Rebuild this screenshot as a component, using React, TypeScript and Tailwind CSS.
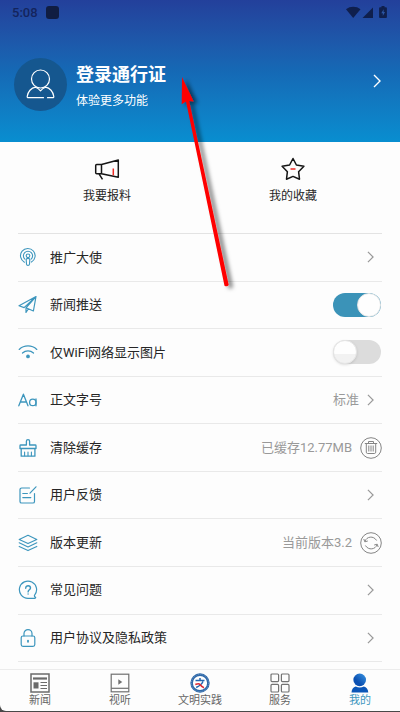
import { ReactNode, useState } from "react";

type IconProps = { className?: string; children: ReactNode };

const LineIcon = ({ className = "h-5 w-5", children }: IconProps) => (
  <svg
    className={`shrink-0 ${className}`}
    viewBox="0 0 20 20"
    fill="none"
    stroke="currentColor"
    strokeWidth="1.1"
    strokeLinecap="round"
    strokeLinejoin="round"
    aria-hidden="true"
  >
    {children}
  </svg>
);

const Chevron = ({ className }: { className: string }) => (
  <svg
    className={`shrink-0 ${className}`}
    viewBox="0 0 8 14"
    fill="none"
    stroke="currentColor"
    aria-hidden="true"
  >
    <path d="M1 1l6 6-6 6" strokeWidth="1.4" />
  </svg>
);

const icons = {
  promote: (
    <LineIcon>
      <path d="M6.4 15.2a7.300 7.300 0 1 1 7-.1" />
      <path d="M6.900 12.200a4.600 4.600 0 1 1 6.200 0" />
      <circle cx="10" cy="8.800" r="1.800" />
      <path d="M8.200 12.600c0-1.700 3.600-1.700 3.600 0l-.3 4.600c-.2 1.600-2.800 1.600-3 0z" />
    </LineIcon>
  ),
  push: (
    <LineIcon>
      <path d="M18 1.500L1 10.800l5.100 1.800zM18 1.500L8 12.800l7.400 3.200zM8 12.800v4.600l2.300-3.400" strokeWidth="1.200" />
    </LineIcon>
  ),
  wifi: (
    <LineIcon>
      <path d="M1.200 7.400c5-4.600 12.600-4.600 17.600 0M4.500 11c3.200-2.900 7.800-2.900 11 0" strokeWidth="1.3" />
      <circle cx="10" cy="14.4" r="1.3" fill="currentColor" />
    </LineIcon>
  ),
  font: (
    <LineIcon>
      <path d="M.8 15.800L5.400 4.200 10 15.800M2.400 12h6M18 9v6.800" strokeWidth="1.3" />
      <circle cx="14.800" cy="12.400" r="3.200" strokeWidth="1.3" />
    </LineIcon>
  ),
  clean: (
    <LineIcon>
      <path d="M8.400 7V3.200a1.600 1.600 0 0 1 3.200 0V7h5.600a.8.800 0 0 1 .8.800v2.700H2V7.800A.8.800 0 0 1 2.800 7zM3.200 10.500v7.700h13.700v-7.700" strokeWidth="1.3" />
      <path d="M6.600 14v3.800M10 14v3.800M13.400 14v3.800" />
    </LineIcon>
  ),
  feedback: (
    <LineIcon>
      <path d="M11.500 3H3.600A1.600 1.600 0 0 0 2 4.600v11.800A1.600 1.600 0 0 0 3.600 18h11.300a1.600 1.600 0 0 0 1.600-1.600V8.500M18 1.800l-6 6.400M4.800 8.500h4.600M4.800 12.600h8" strokeWidth="1.2" />
    </LineIcon>
  ),
  version: (
    <LineIcon>
      <path d="M10 2.200l8.800 4.200-8.800 4.200-8.800-4.200zM1.200 9.800l8.800 4.200 8.800-4.200M1.200 13.400l8.800 4.200 8.800-4.200" />
    </LineIcon>
  ),
  faq: (
    <LineIcon>
      <path d="M17.200 18.300H10a8.600 8.600 0 1 1 6.600-3.100c-.5.700.1 1.600 1.100 2.200" strokeWidth="1.2" />
      <path d="M7.700 8.200c0-3.300 4.800-3 4.800-.2 0 1.800-2.400 1.900-2.400 3.900M10.100 13.900v.2" strokeWidth="1.4" />
    </LineIcon>
  ),
  privacy: (
    <LineIcon>
      <rect x="3.2" y="8" width="13.600" height="10.400" rx="1.800" strokeWidth="1.2" />
      <path d="M6 8V5.600a4 4 0 0 1 8 0V8" strokeWidth="1.2" />
      <path d="M10 12.600v1.200" strokeWidth="1.800" />
    </LineIcon>
  ),
};

const TrashIcon = () => (
  <svg className="h-[22px] w-[22px]" viewBox="0 0 22 22" fill="none" stroke="#858585" aria-hidden="true">
    <circle cx="11" cy="11" r="10.300" />
    <path d="M4.800 6.500h12.400M8.500 6.500v-2h5v2M6.300 6.500v8.700c0 .8.500 1.300 1.300 1.300h6.800c.8 0 1.300-.5 1.300-1.300V6.500M8.800 8.500v6M11 8.500v6M13.200 8.500v6" />
  </svg>
);

const RefreshIcon = () => (
  <svg className="h-[22px] w-[22px]" viewBox="0 0 22 22" fill="none" stroke="#858585" aria-hidden="true">
    <circle cx="11" cy="11" r="10.300" />
    <path d="M5 9.300C6.500 4.500 13.500 3.300 16.600 8.500M17 12.700c-1.500 4.800-8.500 6-11.600.8" />
    <path d="M3.800 7l1 2.800L7.800 9M18.200 15l-1-2.800-3 .8" />
  </svg>
);

const Toggle = ({ id, initial }: { id: string; initial: boolean }) => {
  const [checked, setChecked] = useState(initial);

  return (
    <input
      id={id}
      type="checkbox"
      checked={checked}
      onChange={() => setChecked(!checked)}
      className="ml-auto h-6 w-12 shrink-0 cursor-pointer appearance-none rounded-full bg-[#dcdcdc] before:block before:h-6 before:w-6 before:rounded-full before:border before:border-[#e6e6e6] before:bg-linear-to-b before:from-[#fefefe] before:from-60% before:to-[#f2f2f2] before:to-60% before:shadow-sm checked:bg-[#3b93b8] checked:before:ml-6 checked:before:to-[#fefefe] checked:before:shadow-none"
    />
  );
};

type RowProps = {
  icon: ReactNode;
  label: string;
  toggle?: { id: string; initial: boolean };
  value?: string;
  action?: ReactNode;
};

const rows: RowProps[] = [
  { icon: icons.promote, label: "推广大使" },
  { icon: icons.push, label: "新闻推送", toggle: { id: "push", initial: true } },
  { icon: icons.wifi, label: "仅WiFi网络显示图片", toggle: { id: "wifi", initial: false } },
  { icon: icons.font, label: "正文字号", value: "标准" },
  { icon: icons.clean, label: "清除缓存", value: "已缓存12.77MB", action: <TrashIcon /> },
  { icon: icons.feedback, label: "用户反馈" },
  { icon: icons.version, label: "版本更新", value: "当前版本3.2", action: <RefreshIcon /> },
  { icon: icons.faq, label: "常见问题" },
  { icon: icons.privacy, label: "用户协议及隐私政策" },
];

const SettingRow = ({ icon, label, toggle, value, action }: RowProps) => (
  <li className="flex shrink-0 grow basis-11 border-b border-[#e9e9e9]">
    {toggle ? (
      <div className="flex w-full items-center pr-px">
        <span className="text-[#3d96bd]">{icon}</span>
        <label htmlFor={toggle.id} className="ml-3 cursor-pointer">
          {label}
        </label>
        <Toggle {...toggle} />
      </div>
    ) : (
      <button type="button" className="flex w-full cursor-pointer items-center text-left">
        <span className="text-[#3d96bd]">{icon}</span>
        <span className="ml-3">{label}</span>
        <span className="ml-auto flex items-center gap-2 text-[#999]">
          {value}
          {action ?? <Chevron className="mr-2 h-3 w-[7px]" />}
        </span>
      </button>
    )}
  </li>
);

const tabs = [
  {
    label: "新闻",
    icon: (
      <svg className="h-5 w-5" viewBox="0 0 20 20" fill="none" stroke="#6b6b6b" aria-hidden="true">
        <rect x="1" y="1" width="18" height="18" strokeWidth="1.5" />
        <path d="M3 5.500h14" strokeWidth="2.2" />
        <path d="M10.500 9.500H17M10.500 12.500H17M10.500 15.500H17" strokeWidth="1.2" />
        <path d="M3.500 9.300h5v6.200h-5z" fill="#6b6b6b" stroke="none" />
      </svg>
    ),
  },
  {
    label: "视听",
    icon: (
      <svg className="h-5 w-5" viewBox="0 0 20 20" fill="none" stroke="#707070" aria-hidden="true">
        <rect x="1.2" y="1.2" width="17.600" height="17.600" strokeWidth="1.2" />
        <path d="M1.200 15.300h17.600" strokeWidth="1.2" />
        <path d="M8.300 6.300l4 2.700-4 2.700z" fill="#707070" stroke="none" />
      </svg>
    ),
  },
  {
    label: "文明实践",
    icon: (
      <svg className="h-5 w-5" viewBox="0 0 20 20" fill="none" aria-hidden="true">
        <circle cx="10" cy="10" r="8.400" fill="#fff" stroke="#2f68a8" strokeWidth="2.6" />
        <circle cx="10" cy="10" r="8.600" stroke="#9fc0e0" strokeWidth=".5" strokeDasharray="1 1" />
        <path d="M5.500 7.500h9M10 5v2.500M13 8.500c-1.300 2.800-3.500 4.500-6.800 6" stroke="#2467b0" strokeWidth="1.5" />
        <path d="M5.300 11.500c2-.8 3.500-1.700 4.700 0s2.600 2.700 4 3.200" stroke="#dc2b35" strokeWidth="1.5" />
      </svg>
    ),
  },
  {
    label: "服务",
    icon: (
      <svg className="h-5 w-5" viewBox="0 0 20 20" fill="none" stroke="#747474" strokeWidth="1.2" aria-hidden="true">
        <rect x="1" y="1" width="7.600" height="7.600" rx="1" />
        <rect x="11.400" y="1" width="7.600" height="7.600" rx="1" />
        <rect x="1" y="11.400" width="7.600" height="7.600" rx="1" />
        <rect x="11.400" y="11.400" width="7.600" height="7.600" rx="1" />
      </svg>
    ),
  },
  {
    label: "我的",
    active: true,
    icon: (
      <svg className="h-5 w-5" viewBox="0 0 20 20" aria-hidden="true">
        <defs>
          <linearGradient id="mine" x1="0" y1="1" x2="1" y2="0">
            <stop offset=".35" stopColor="#0b50b2" />
            <stop offset=".85" stopColor="#2f86d8" />
          </linearGradient>
        </defs>
        <circle cx="9.700" cy="6.900" r="6.300" fill="url(#mine)" />
        <path d="M1.500 19.500c.2-3.400 1.700-5.500 4.200-6.100 2.500 1.500 5.700 1.500 8.200 0 2.500.6 4.200 2.700 4.400 6.100z" fill="#0b56b8" />
      </svg>
    ),
  },
];

const StatusBar = () => (
  <div className="flex h-6 items-center px-3 text-[#14245c]">
    <span className="text-[13px] leading-none font-medium">5:08</span>
    <span className="ml-2 h-[13px] w-[13px] rounded-[3px] bg-[#101d42]" />
    <svg className="ml-auto h-3 w-[42px]" viewBox="0 0 42 12" fill="#0f1f4d" aria-hidden="true">
      <path d="M0 3.200C4-.1 10.500-.1 14.500 3.200L7.200 12z" />
      <path d="M27 1.500V12H16.500z" />
      <path d="M35.500 1.200V0h3v1.200h1.500q.9 0 .9 1V11q0 1-.9 1H34q-.9 0-.9-1V2.200q0-1 .9-1z" />
      <path d="M37.600 3.300l-2.300 3.900h1.500v2.900l2.200-4h-1.400z" fill="#2b56a5" />
    </svg>
  </div>
);

const Arrow = () => (
  <svg
    className="pointer-events-none absolute left-[170px] top-[68px] h-[232px] w-[75px]"
    viewBox="170 68 75 232"
    aria-hidden="true"
  >
    <defs>
      <filter id="arrow-shadow" x="-30%" y="-10%" width="180%" height="120%">
        <feDropShadow dx="4" dy="2" stdDeviation="2" floodColor="#000" floodOpacity=".55" />
      </filter>
    </defs>
    <path
      d="M182 77l11.700 24.600-4.500-.7 39.500 184q-1.500 2.200-4.200.8L186 101.600l-4.300 2.600z"
      fill="#fe0000"
      filter="url(#arrow-shadow)"
    />
  </svg>
);

export default function App() {
  return (
    <div className="relative flex min-h-screen flex-col bg-[#fdfdfd] font-['Roboto','Noto_Sans_CJK_SC',sans-serif] text-[13px] text-[#262626]">
      <header className="bg-linear-to-b from-[#23409b] via-[#1569b5] to-[#088ed0] pb-[31px]">
        <StatusBar />
        <a href="#login" className="mt-[34px] flex items-center pr-[19px] pl-[14px] text-white">
          <span className="flex h-[53px] w-[53px] items-center justify-center rounded-full bg-[#15578f]">
            <svg
              className="h-[31px] w-[31px]"
              viewBox="0 0 31 31"
              fill="none"
              stroke="#fff"
              strokeWidth="1.2"
              strokeLinejoin="round"
              strokeLinecap="round"
              aria-hidden="true"
            >
              <circle cx="15.500" cy="10" r="9" />
              <path d="M18.500 28.700H3.200c-.7 0-1.100-.4-1-1.200.6-4.800 4-8.800 8.300-9.300 1.800.6 3.500 1.800 5 3.600 1.500-1.800 3.200-3 5-3.600 4.300.5 7.700 4.500 8.300 9.300.1.800-.3 1.200-1 1.200h-5.300" />
            </svg>
          </span>
          <span className="ml-[9px] flex flex-col gap-1 self-end">
            <span className="text-lg leading-6 font-bold">登录通行证</span>
            <span className="text-xs leading-5">体验更多功能</span>
          </span>
          <Chevron className="mb-2 ml-auto h-[14px] w-2" />
        </a>
      </header>

      <section className="flex px-[14px] pt-3 pb-[29px] text-xs">
        <button type="button" className="flex flex-1 cursor-pointer flex-col items-center gap-1">
          <svg
            className="h-[30px] w-[26px]"
            viewBox="0 0 26 30"
            fill="none"
            stroke="#151515"
            strokeWidth="1.5"
            strokeLinejoin="round"
            aria-hidden="true"
          >
            <path d="M7.500 10.500L24.300 6v17.300L7.500 19.800zM7.500 10.500H2.700q-1 0-1 1v7.300q0 1 1 1h4.800M5 19.800l3.500 5.500" />
            <path d="M19.300 14.500v6.800" stroke="#ee2a24" />
          </svg>
          我要报料
        </button>
        <button type="button" className="flex flex-1 cursor-pointer flex-col items-center gap-1">
          <svg
            className="h-[30px] w-[26px]"
            viewBox="0 0 26 30"
            fill="none"
            stroke="#151515"
            strokeWidth="1.5"
            strokeLinejoin="round"
            aria-hidden="true"
          >
            <path d="M13 4.500l3.400 6.500 7.500 1.300-5.300 5.400.9 7.500-6.500-2.800-6.500 2.800.9-7.500-5.300-5.400L9.600 11z" />
            <path d="M10.500 15h5" stroke="#ee2a24" />
          </svg>
          我的收藏
        </button>
      </section>

      <ul className="mx-[18px] mb-[7px] flex grow flex-col border-t border-[#e3e3e3]">
        {rows.map((row) => (
          <SettingRow key={row.label} {...row} />
        ))}
      </ul>

      <div className="bg-[#484848] pb-px">
        <nav className="flex rounded-bl-md border-t border-[#ececec] bg-[#fdfdfd] pt-[3px] pb-[3px]">
          {tabs.map((tab) => (
            <a
              key={tab.label}
              href="#tab"
              className={`flex flex-1 flex-col items-center text-[11px] leading-[15px] ${
                tab.active ? "text-[#3d96bd]" : "text-[#666]"
              }`}
            >
              {tab.icon}
              {tab.label}
            </a>
          ))}
        </nav>
      </div>

      <Arrow />
    </div>
  );
}
